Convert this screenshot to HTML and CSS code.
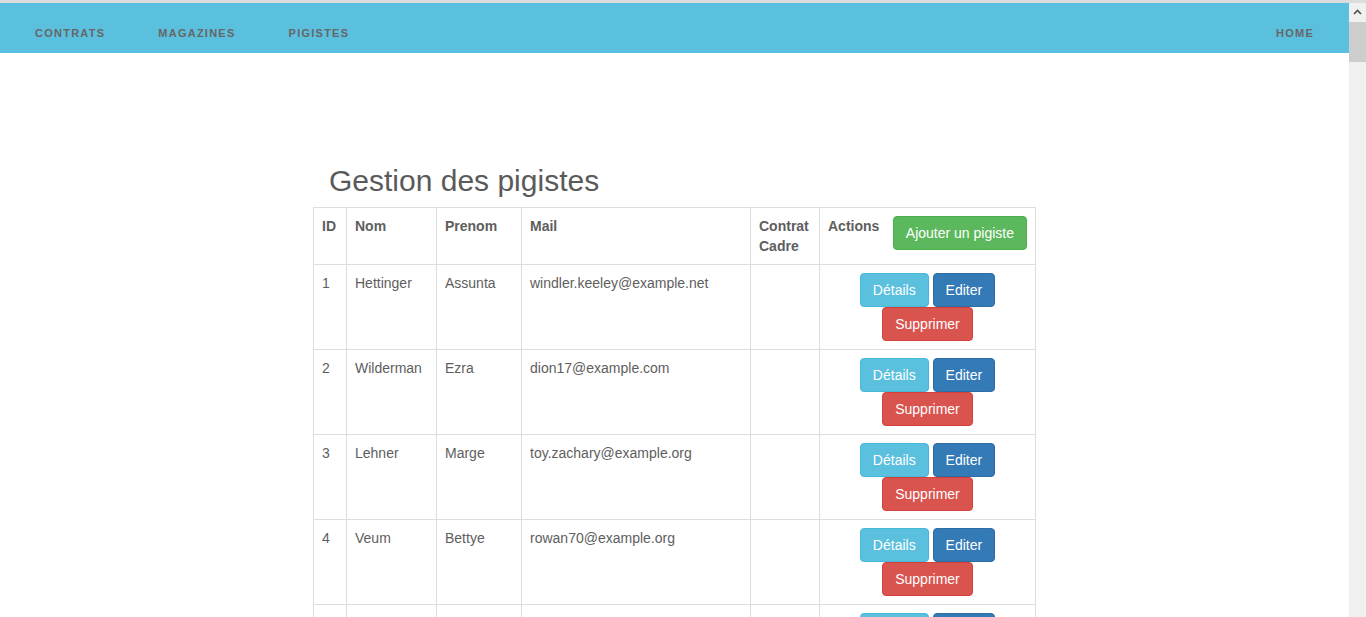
FILE: index.html
```html
<!DOCTYPE html>
<html lang="fr">
<head>
<meta charset="utf-8">
<title>Gestion des pigistes</title>
<link rel="stylesheet" href="styles.css">
</head>
<body>
<div class="top-strip"></div>
<div class="frame">
  <div class="page">
    <nav class="navbar">
      <ul class="nav-left">
        <li><a href="#">Contrats</a></li>
        <li><a href="#">Magazines</a></li>
        <li><a href="#">Pigistes</a></li>
      </ul>
      <ul class="nav-right">
        <li><a href="#">Home</a></li>
      </ul>
    </nav>
    <main class="container">
      <h2 class="title">Gestion des pigistes</h2>
      <table class="table">
        <colgroup>
          <col class="c-id"><col class="c-nom"><col class="c-prenom"><col class="c-mail"><col class="c-contrat"><col class="c-actions">
        </colgroup>
        <thead>
          <tr>
            <th>ID</th>
            <th>Nom</th>
            <th>Prenom</th>
            <th>Mail</th>
            <th>Contrat Cadre</th>
            <th class="th-actions">Actions <a href="#" class="btn btn-success">Ajouter un pigiste</a></th>
          </tr>
        </thead>
        <tbody>
          <tr>
            <td>1</td><td>Hettinger</td><td>Assunta</td><td>windler.keeley@example.net</td><td></td>
            <td class="actions"><a href="#" class="btn btn-info">Détails</a> <a href="#" class="btn btn-primary">Editer</a> <a href="#" class="btn btn-danger">Supprimer</a></td>
          </tr>
          <tr>
            <td>2</td><td>Wilderman</td><td>Ezra</td><td>dion17@example.com</td><td></td>
            <td class="actions"><a href="#" class="btn btn-info">Détails</a> <a href="#" class="btn btn-primary">Editer</a> <a href="#" class="btn btn-danger">Supprimer</a></td>
          </tr>
          <tr>
            <td>3</td><td>Lehner</td><td>Marge</td><td>toy.zachary@example.org</td><td></td>
            <td class="actions"><a href="#" class="btn btn-info">Détails</a> <a href="#" class="btn btn-primary">Editer</a> <a href="#" class="btn btn-danger">Supprimer</a></td>
          </tr>
          <tr>
            <td>4</td><td>Veum</td><td>Bettye</td><td>rowan70@example.org</td><td></td>
            <td class="actions"><a href="#" class="btn btn-info">Détails</a> <a href="#" class="btn btn-primary">Editer</a> <a href="#" class="btn btn-danger">Supprimer</a></td>
          </tr>
          <tr>
            <td>5</td><td>Kuhn</td><td>Lela</td><td>kuhn.lela@example.com</td><td></td>
            <td class="actions"><a href="#" class="btn btn-info">Détails</a> <a href="#" class="btn btn-primary">Editer</a> <a href="#" class="btn btn-danger">Supprimer</a></td>
          </tr>
        </tbody>
      </table>
    </main>
  </div>
  <div class="scrollbar">
    <div class="sb-arrow">
      <svg width="9" height="6" viewBox="0 0 9 6"><path d="M1 5 L4.5 1.5 L8 5" fill="none" stroke="#505050" stroke-width="1.6"/></svg>
    </div>
    <div class="sb-thumb"></div>
  </div>
</div>
</body>
</html>
```

FILE: styles.css
```css
* { box-sizing: border-box; }
html, body {
  margin: 0;
  padding: 0;
  height: 617px;
  overflow: hidden;
  background: #fff;
}
body {
  font-family: "Liberation Sans", Arial, Helvetica, sans-serif;
  font-size: 14px;
  line-height: 20px;
  color: #5e5e5e;
}
.top-strip {
  height: 3px;
  background: #dcdcdc;
}
.frame {
  display: flex;
  height: 614px;
}
.page {
  flex: 1;
  overflow: hidden;
  min-width: 0;
}
.scrollbar {
  width: 17px;
  background: #f0f0f0;
  display: flex;
  flex-direction: column;
}
.sb-arrow {
  height: 17px;
  display: flex;
  align-items: center;
  justify-content: center;
}
.sb-thumb {
  margin-top: 2px;
  height: 40px;
  background: #cdcdcd;
}
.navbar {
  height: 50px;
  background: #5bc0de;
  display: flex;
  justify-content: space-between;
  align-items: center;
  padding: 8px 35px 0 35px;
}
.navbar ul {
  list-style: none;
  margin: 0;
  padding: 0;
  display: flex;
  gap: 53px;
}
.navbar a {
  color: #666666;
  text-decoration: none;
  text-transform: uppercase;
  font-weight: bold;
  font-size: 11px;
  letter-spacing: 1.25px;
}
.container {
  width: 723px;
  margin: 0 auto;
  padding-top: 111px;
}
.title {
  margin: 0 0 10px 0;
  padding-left: 16px;
  font-size: 30px;
  font-weight: normal;
  line-height: 33px;
  color: #5a5a5a;
}
.table {
  width: 722px;
  border-collapse: collapse;
  table-layout: fixed;
}
.c-id { width: 33px; }
.c-nom { width: 90px; }
.c-prenom { width: 85px; }
.c-mail { width: 229px; }
.c-contrat { width: 69px; }
.c-actions { width: 216px; }
.table th, .table td {
  border: 1px solid #dddddd;
  padding: 8px;
  vertical-align: top;
  text-align: left;
}
.table th {
  font-weight: bold;
}
.th-actions .btn {
  float: right;
}
.table td.actions {
  text-align: center;
}
.btn {
  display: inline-block;
  padding: 6px 12px;
  font-size: 14px;
  line-height: 20px;
  border: 1px solid transparent;
  border-radius: 4px;
  color: #fff;
  text-decoration: none;
  font-weight: normal;
  vertical-align: middle;
  white-space: nowrap;
}
.btn-info { background: #5bc0de; border-color: #46b8da; }
.btn-primary { background: #337ab7; border-color: #2e6da4; }
.btn-danger { background: #d9534f; border-color: #d43f3a; }
.btn-success { background: #5cb85c; border-color: #4cae4c; }
```
